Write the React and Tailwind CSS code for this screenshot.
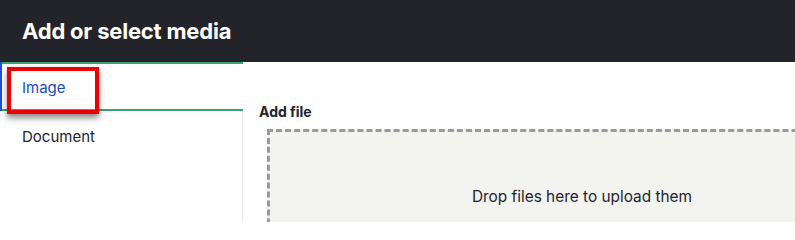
export default function App() {
  return (
    <div className="w-[795px] h-[222px] overflow-hidden bg-white font-['Inter',sans-serif]">
      {/* Dialog title bar */}
      <div className="h-[62px] bg-[#232429] flex items-center px-[22px]">
        <h1 className="text-[22px] font-bold text-white tracking-[-0.2px]">Add or select media</h1>
      </div>

      <div className="flex h-[160px]">
        {/* Media type tabs */}
        <div className="w-[243px] shrink-0 relative">
          <div className="absolute right-0 top-[48px] bottom-0 w-px bg-[#e6e6e6]" />
          <ul className="text-[15px] relative">
            <li className="relative h-[49px] border-t-2 border-b-2 border-[#3ba36d] flex items-center pl-[22px] pt-[4px]">
              <span className="absolute left-0 -top-[2px] -bottom-[2px] w-[2px] bg-[#1f4ed8]" />
              <span className="text-[#1b47cc]">Image</span>
              {/* annotation box */}
              <span className="absolute left-[7px] top-[3px] w-[92px] h-[47px] border-4 border-[#ee0000] shadow-[0_4px_6px_rgba(0,0,0,0.45)]" />
            </li>
            <li className="h-[48px] flex items-center pl-[22px] pt-[4px] text-[#222330]">Document</li>
          </ul>
        </div>

        {/* Upload form */}
        <div className="flex-1 pl-[16px] pt-[41px]">
          <div className="text-[14px] font-bold text-[#222330] leading-[18px]">Add file</div>
          <div className="mt-[8px] ml-[8px] w-[630px] shrink-0 h-[140px] bg-[#f3f4ef] border-[3px] border-dashed border-[#9a9a9a] flex justify-center pt-[53px]">
            <span className="text-[15.4px] text-[#222330]">Drop files here to upload them</span>
          </div>
        </div>
      </div>
    </div>
  );
}
